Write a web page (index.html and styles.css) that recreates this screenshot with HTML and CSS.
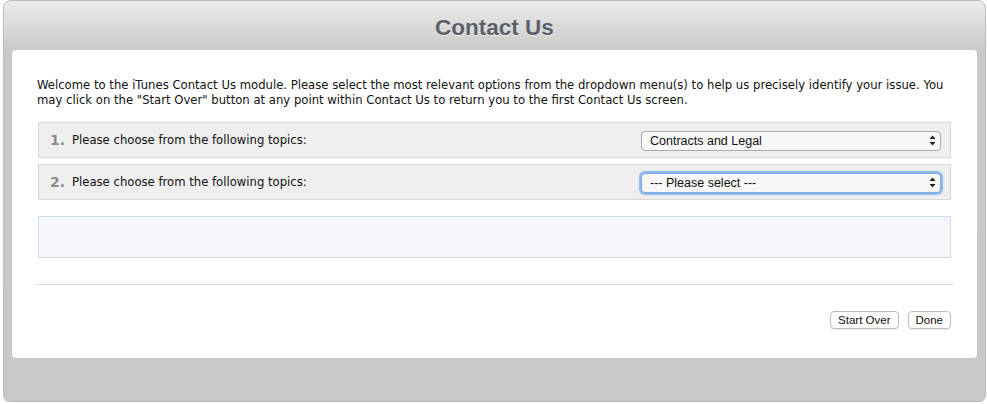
FILE: index.html
```html
<!DOCTYPE html>
<html lang="en">
<head>
  <meta charset="UTF-8" />
  <title>Contact Us</title>
  <link rel="stylesheet" href="styles.css">
</head>
<body>
  <div class="window">
    <header class="title-bar">Contact Us</header>

    <div class="panel">
      <p class="intro">Welcome to the iTunes Contact Us module. Please select the most relevant options from the dropdown menu(s) to help us precisely identify your issue. You may click on the "Start Over" button at any point within Contact Us to return you to the first Contact Us screen.</p>

      <div class="step">
        <span class="step-num">1.</span>
        <span class="step-label">Please choose from the following topics:</span>
        <div class="select-wrap">
          <select class="topic">
            <option>Contracts and Legal</option>
          </select>
          <svg class="arrows" width="7" height="11" viewBox="0 0 7 11"><path d="M3.5 0.5 L6.5 4 H0.5 Z M3.5 10.5 L6.5 7 H0.5 Z" fill="#222"/></svg>
        </div>
      </div>

      <div class="step">
        <span class="step-num">2.</span>
        <span class="step-label">Please choose from the following topics:</span>
        <div class="select-wrap">
          <select class="topic focused">
            <option>--- Please select ---</option>
          </select>
          <svg class="arrows" width="7" height="11" viewBox="0 0 7 11"><path d="M3.5 0.5 L6.5 4 H0.5 Z M3.5 10.5 L6.5 7 H0.5 Z" fill="#222"/></svg>
        </div>
      </div>

      <div class="answer-box"></div>

      <hr class="divider">

      <div class="actions">
        <button class="btn">Start Over</button>
        <button class="btn">Done</button>
      </div>
    </div>
  </div>
</body>
</html>
```

FILE: styles.css
```css
* { box-sizing: border-box; }
body {
  margin: 0;
  background: #fff;
  font-family: 'DejaVu Sans', 'Liberation Sans', sans-serif;
}

.window {
  margin-left: 3px;
  width: 983px;
  height: 402px;
  border: 1px solid #bcbcbc;
  border-radius: 8px;
  background: linear-gradient(#ececec, #c9c9c9 50px, #c8c8c8);
  box-shadow: 0 1px 1px rgba(0, 0, 0, 0.25);
  padding: 0 8px;
}

.title-bar {
  height: 49px;
  display: flex;
  align-items: center;
  justify-content: center;
  padding-top: 4px;
  font-family: 'Liberation Sans', Arial, sans-serif;
  font-weight: bold;
  font-size: 22.5px;
  color: #5b6068;
  text-shadow: 0 1px 0 rgba(255, 255, 255, 0.6);
}

.panel {
  background: #fff;
  border-radius: 4px;
  height: 308px;
  padding: 28px 26px 0 26px;
}

.intro {
  margin: 0 0 14px -1px;
  font-size: 11.65px;
  line-height: 15px;
  color: #111;
}

.step {
  display: flex;
  align-items: center;
  height: 36px;
  margin-bottom: 6px;
  padding: 0 9px 0 11px;
  background: #efefef;
  border: 1px solid #d8d8d8;
}

.step-num {
  width: 22px;
  font-size: 14px;
  font-weight: bold;
  color: #8c8c8c;
}

.step-label {
  flex: 1;
  font-size: 11.65px;
  color: #111;
}

.select-wrap {
  position: relative;
  width: 300px;
  height: 20px;
}

.topic {
  appearance: none;
  -webkit-appearance: none;
  width: 100%;
  height: 20px;
  margin: 0;
  padding: 0 0 0 8px;
  border: 1px solid #a9a9a9;
  border-radius: 4px;
  background: #f7f7f7;
  font-family: 'Liberation Sans', Arial, sans-serif;
  font-size: 12.5px;
  color: #111;
}

.topic.focused {
  border-color: #7aaee9;
  box-shadow: 0 0 1px 2px rgba(110, 165, 235, 0.75);
}

.arrows {
  position: absolute;
  right: 5px;
  top: 5px;
}

.answer-box {
  margin-top: 16px;
  height: 42px;
  background: #f4f6f9;
  border: 1px solid #cfdcea;
}

.divider {
  margin: 26px -2px 0 -2px;
  border: none;
  border-top: 1px solid #dcdcdc;
}

.actions {
  display: flex;
  justify-content: flex-end;
  gap: 9px;
  margin-top: 26px;
}

.btn {
  height: 18px;
  padding: 0 7px;
  background: #fff;
  border: 1px solid #bdbdbd;
  border-radius: 4px;
  box-shadow: 0 1px 1px rgba(0, 0, 0, 0.08);
  font-family: 'Liberation Sans', Arial, sans-serif;
  font-size: 11.5px;
  color: #111;
}
```
